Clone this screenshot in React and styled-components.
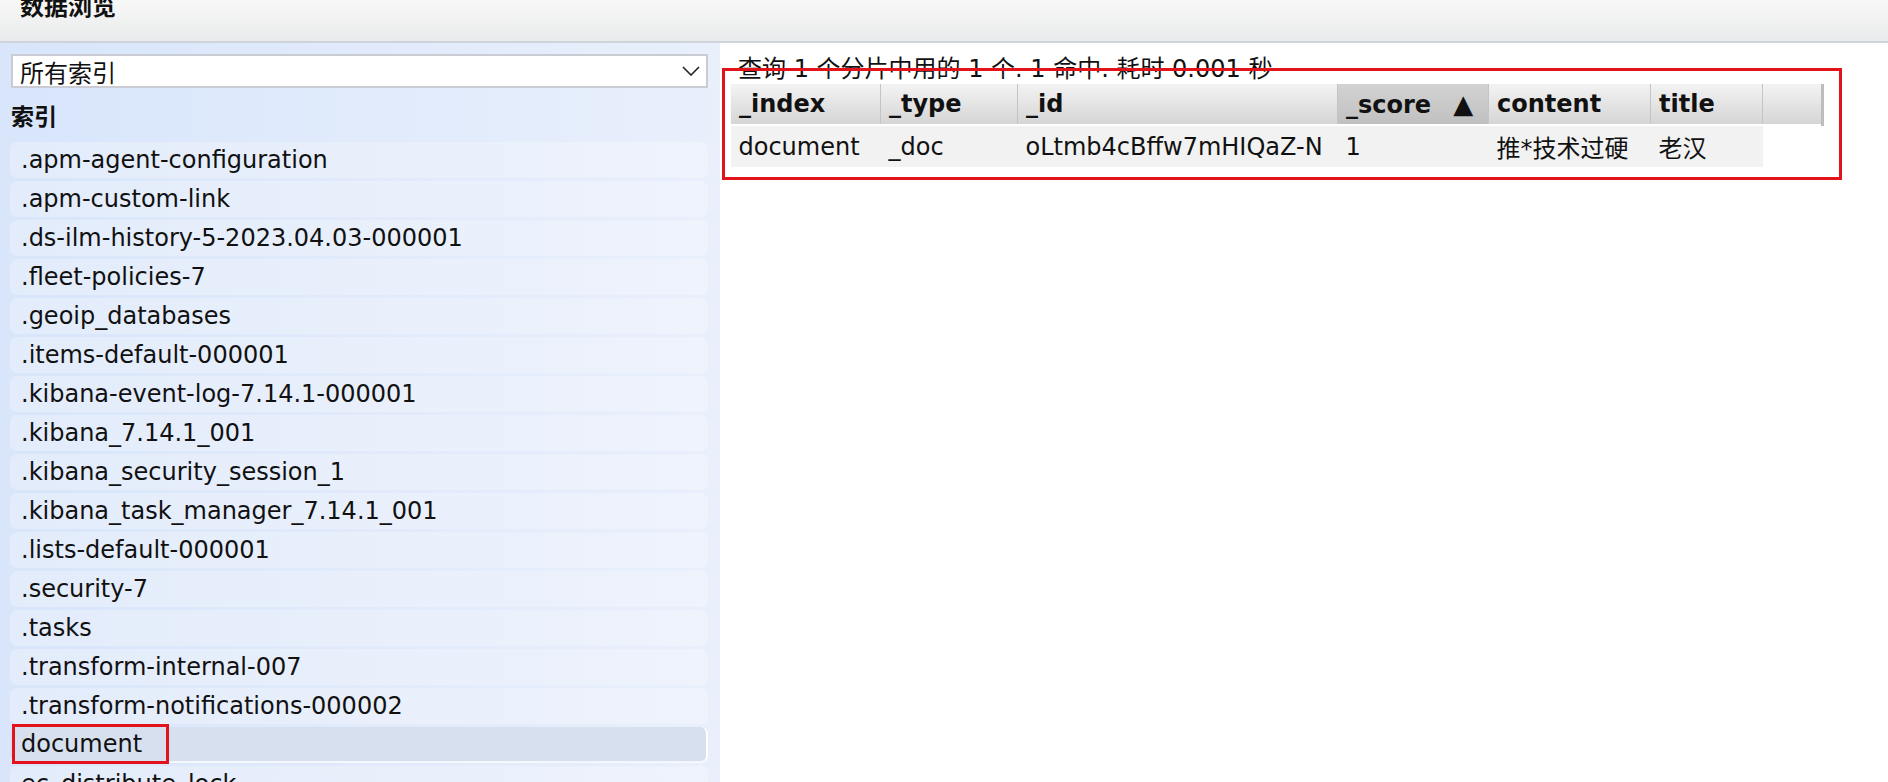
import React from "react";
import styled, { createGlobalStyle } from "styled-components";

const GlobalStyle = createGlobalStyle`
  html, body {
    margin: 0;
    padding: 0;
    overflow: hidden;
    background: #ffffff;
  }
  body {
    font-family: "DejaVu Sans", "Noto Sans CJK SC", sans-serif;
    color: #111;
  }
  * { box-sizing: border-box; }
`;

const Page = styled.div`
  height: 782px;
  display: flex;
  flex-direction: column;
  overflow: hidden;
`;

const Header = styled.header`
  height: 43px;
  flex: none;
  background: linear-gradient(#f8f8f8, #e9eaeb);
  border-bottom: 2px solid #cfd4db;
  padding-left: 20px;
  overflow: hidden;
`;

const Title = styled.h1`
  margin: -7px 0 0 0;
  font-size: 24px;
  line-height: 24px;
  font-weight: bold;
  font-family: "Noto Sans CJK SC", sans-serif;
  color: #111;
`;

const Main = styled.div`
  flex: 1;
  min-height: 0;
  display: flex;
`;

const Sidebar = styled.aside`
  width: 720px;
  flex: none;
  background: linear-gradient(to right, #d8e5fb, #e9f0fc);
  padding: 11px 12px 0 10px;
  display: flex;
  flex-direction: column;
  overflow: hidden;
`;

const Select = styled.div`
  height: 34px;
  margin-left: 1px;
  background: #fff;
  border: 2px solid #c9cdd3;
  display: flex;
  align-items: center;
  justify-content: space-between;
  padding: 0 6px 0 7px;
  font-size: 24px;
  font-family: "Noto Sans CJK SC", sans-serif;
`;

const SectionLabel = styled.div`
  margin: 13px 0 0 1px;
  height: 28px;
  line-height: 28px;
  font-size: 23px;
  font-weight: bold;
  font-family: "Noto Sans CJK SC", sans-serif;
`;

const IndexList = styled.div`
  margin-top: 13px;
  display: flex;
  flex-direction: column;
  gap: 3px;
`;

const IndexItem = styled.div`
  height: 36px;
  flex: none;
  border-radius: 7px;
  padding-left: 11px;
  display: flex;
  align-items: stretch;
  font-size: 24px;
  white-space: nowrap;
  background: ${(p) =>
    p.$selected
      ? "#d6e0ee"
      : "linear-gradient(to right, #e3ecfb, #eef3fc)"};
  border-right: ${(p) => (p.$selected ? "2px solid #ffffff" : "none")};
  border-bottom: ${(p) => (p.$selected ? "2px solid #f4f7fc" : "none")};
`;

const ItemText = styled.span`
  display: flex;
  align-items: center;
`;

const Marked = styled.span`
  display: flex;
  align-items: center;
  margin-left: -6px;
  padding-left: 6px;
  width: 151px;
  outline: 3px solid #e3131b;
  position: relative;
`;

const ResultPane = styled.section`
  flex: 1;
  background: #fff;
  padding: 13px 0 0 2px;
`;

const Summary = styled.div`
  padding-left: 16px;
  height: 26px;
  line-height: 26px;
  font-size: 24px;
  white-space: nowrap;
`;

const Frame = styled.div`
  position: relative;
  margin-top: -14px;
  width: 1120px;
  border: 3px solid #e3131b;
  padding: 13px 17px 10px 5px;
`;

const Table = styled.table`
  width: 1092px;
  border-collapse: collapse;
  table-layout: fixed;
  font-size: 24px;
`;

const HeadCell = styled.th`
  height: 41px;
  padding: 0 0 0 8px;
  text-align: left;
  font-weight: bold;
  white-space: nowrap;
  overflow: hidden;
  background: ${(p) =>
    p.$sorted
      ? "linear-gradient(#d2d2d2, #c0c0c0)"
      : "linear-gradient(#f3f3f3, #d5d5d5)"};
  border-left: 1px solid #fbfbfb;
  border-right: ${(p) => (p.$last ? "3px solid #bdbdbd" : "1px solid #c4c4c4")};
`;

const Arrow = styled.span`
  margin-left: 22px;
  font-size: 26px;
`;

const Cell = styled.td`
  height: 42px;
  padding: 0 0 0 8px;
  border-top: 2px solid #fff;
  white-space: nowrap;
  overflow: hidden;
  background: ${(p) => (p.$empty ? "#fff" : "#f2f2f2")};
`;

const indices = [
  ".apm-agent-configuration",
  ".apm-custom-link",
  ".ds-ilm-history-5-2023.04.03-000001",
  ".fleet-policies-7",
  ".geoip_databases",
  ".items-default-000001",
  ".kibana-event-log-7.14.1-000001",
  ".kibana_7.14.1_001",
  ".kibana_security_session_1",
  ".kibana_task_manager_7.14.1_001",
  ".lists-default-000001",
  ".security-7",
  ".tasks",
  ".transform-internal-007",
  ".transform-notifications-000002",
  "document",
  "ec_distribute_lock",
  "ec_distribute_log",
];

const columns = [
  { key: "_index", w: 150 },
  { key: "_type", w: 137 },
  { key: "_id", w: 320 },
  { key: "_score", w: 151, sorted: true },
  { key: "content", w: 162 },
  { key: "title", w: 112 },
  { key: "", w: 60, last: true },
];

const row = ["document", "_doc", "oLtmb4cBffw7mHIQaZ-N", "1", "推*技术过硬", "老汉", ""];

const Chevron = () => (
  <svg width="18" height="10" viewBox="0 0 18 10" fill="none">
    <polyline points="1,1 9,9 17,1" stroke="#222" strokeWidth="1.6" />
  </svg>
);

export default function App() {
  return (
    <>
      <GlobalStyle />
      <Page>
        <Header>
          <Title>数据浏览</Title>
        </Header>
        <Main>
          <Sidebar>
            <Select>
              <span>所有索引</span>
              <Chevron />
            </Select>
            <SectionLabel>索引</SectionLabel>
            <IndexList>
              {indices.map((name) => (
                <IndexItem key={name} $selected={name === "document"}>
                  {name === "document" ? (
                    <Marked>{name}</Marked>
                  ) : (
                    <ItemText>{name}</ItemText>
                  )}
                </IndexItem>
              ))}
            </IndexList>
          </Sidebar>
          <ResultPane>
            <Summary>查询 1 个分片中用的 1 个. 1 命中. 耗时 0.001 秒</Summary>
            <Frame>
              <Table>
                <colgroup>
                  {columns.map((c, i) => (
                    <col key={i} style={{ width: c.w }} />
                  ))}
                </colgroup>
                <thead>
                  <tr>
                    {columns.map((c, i) => (
                      <HeadCell key={i} $sorted={c.sorted} $last={c.last}>
                        {c.key}
                        {c.sorted && <Arrow>▲</Arrow>}
                      </HeadCell>
                    ))}
                  </tr>
                </thead>
                <tbody>
                  <tr>
                    {row.map((v, i) => (
                      <Cell key={i} $empty={i === row.length - 1}>
                        {v}
                      </Cell>
                    ))}
                  </tr>
                </tbody>
              </Table>
            </Frame>
          </ResultPane>
        </Main>
      </Page>
    </>
  );
}
